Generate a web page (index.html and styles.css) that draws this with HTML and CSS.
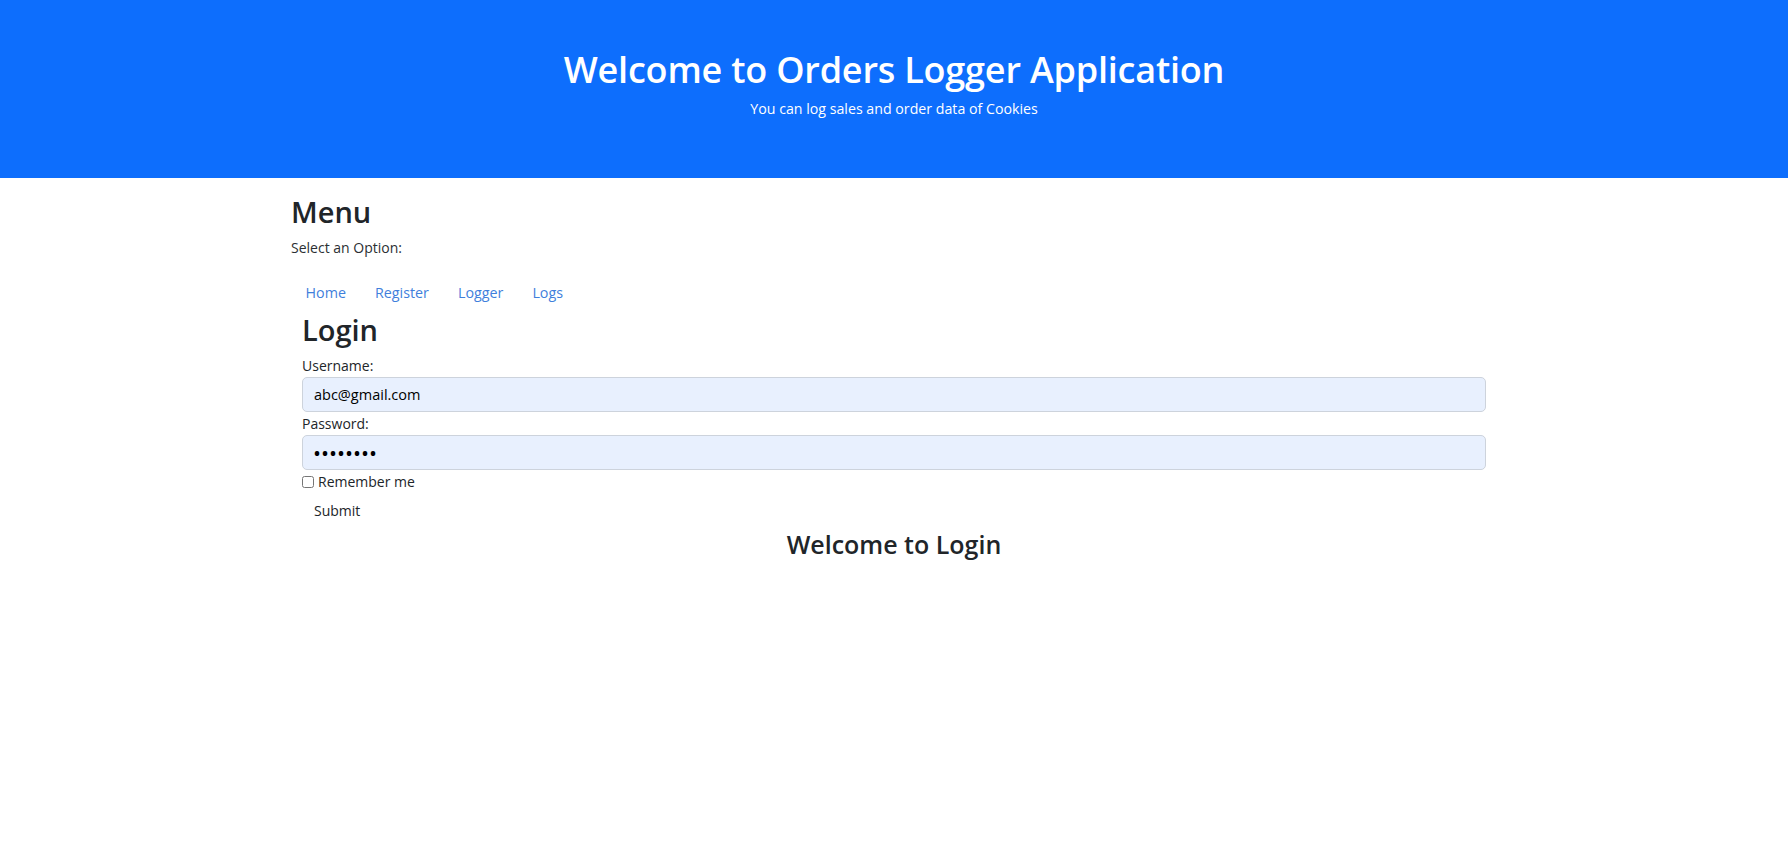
FILE: index.html
```html
<!DOCTYPE html>
<html lang="en">
<head>
<meta charset="utf-8">
<title>Orders Logger</title>
<link rel="stylesheet" href="styles.css">
</head>
<body>
<header class="hero">
  <h1 class="hero-title">Welcome to Orders Logger Application</h1>
  <p class="hero-sub">You can log sales and order data of Cookies</p>
</header>
<main class="container">
  <h2 class="section-title">Menu</h2>
  <p class="menu-hint">Select an Option:</p>
  <ul class="nav">
    <li><a class="nav-link" href="#">Home</a></li>
    <li><a class="nav-link" href="#">Register</a></li>
    <li><a class="nav-link" href="#">Logger</a></li>
    <li><a class="nav-link" href="#">Logs</a></li>
  </ul>
  <section class="login">
    <h2 class="section-title">Login</h2>
    <form class="login-form">
      <label class="field-label" for="username">Username:</label>
      <input class="field-input" id="username" type="text" value="abc@gmail.com">
      <label class="field-label" for="password">Password:</label>
      <input class="field-input" id="password" type="password" value="abcdefgh">
      <div class="remember">
        <input class="remember-box" type="checkbox" id="remember">
        <label for="remember">Remember me</label>
      </div>
      <button class="submit-btn" type="button">Submit</button>
    </form>
    <h3 class="welcome">Welcome to Login</h3>
  </section>
</main>
</body>
</html>
```
FILE: styles.css
```css
html, body {
  margin: 0;
  padding: 0;
  background: #ffffff;
}
body {
  font-family: "Open Sans", "Noto Sans", sans-serif;
  color: #212529;
  font-size: 15px;
}
.hero {
  background: #0d6efd;
  color: #ffffff;
  text-align: center;
  height: 178px;
  box-sizing: border-box;
  padding-top: 48px;
}
.hero-title {
  margin: 0;
  font-size: 36px;
  line-height: 44px;
  font-weight: 600;
  letter-spacing: -0.2px;
}
.hero-sub {
  margin: 7px 0 0;
  font-size: 14.2px;
  line-height: 20px;
}
.container {
  width: 1206px;
  margin: 0 auto;
}
.section-title {
  margin: 16px 0 0;
  font-size: 29px;
  line-height: 36px;
  font-weight: 600;
}
.menu-hint {
  margin: 7px 0 0;
  font-size: 14px;
  line-height: 22px;
  color: #2b2f33;
}
.nav {
  list-style: none;
  margin: 23px 0 0;
  padding: 0;
  display: flex;
}
.nav-link {
  display: block;
  padding: 0 14.5px;
  font-size: 14.3px;
  line-height: 22px;
  color: #3f7fdc;
  text-decoration: none;
}
.login {
  padding: 0 11px;
}
.login .section-title {
  margin-top: 8px;
}
.login-form {
  margin-top: 7px;
  display: flex;
  flex-direction: column;
  align-items: flex-start;
}
.field-label {
  font-size: 14px;
  line-height: 22px;
}
.field-input {
  box-sizing: border-box;
  width: 100%;
  height: 35px;
  margin: 0;
  padding: 0 11px;
  border: 1px solid #cdd3dc;
  border-radius: 5px;
  background: #e8f0fe;
  font-family: "Open Sans", "Noto Sans", sans-serif;
  font-size: 14.5px;
  color: #000000;
  outline: none;
}
#password {
  font-size: 16px;
  font-weight: 700;
  letter-spacing: 2px;
}
.field-input + .field-label {
  margin-top: 1px;
}
.remember {
  display: flex;
  align-items: center;
  margin-top: 2px;
  font-size: 14px;
  line-height: 20px;
}
.remember-box {
  margin: 0 4px 0 0;
  width: 12px;
  height: 12px;
}
.submit-btn {
  margin-top: 2px;
  padding: 6px 12px;
  border: none;
  background: transparent;
  font-family: "Open Sans", "Noto Sans", sans-serif;
  font-size: 14px;
  line-height: 22px;
  color: #212529;
  cursor: pointer;
}
.welcome {
  margin: 1px 0 0;
  text-align: center;
  font-size: 25px;
  line-height: 31px;
  font-weight: 600;
}
```
